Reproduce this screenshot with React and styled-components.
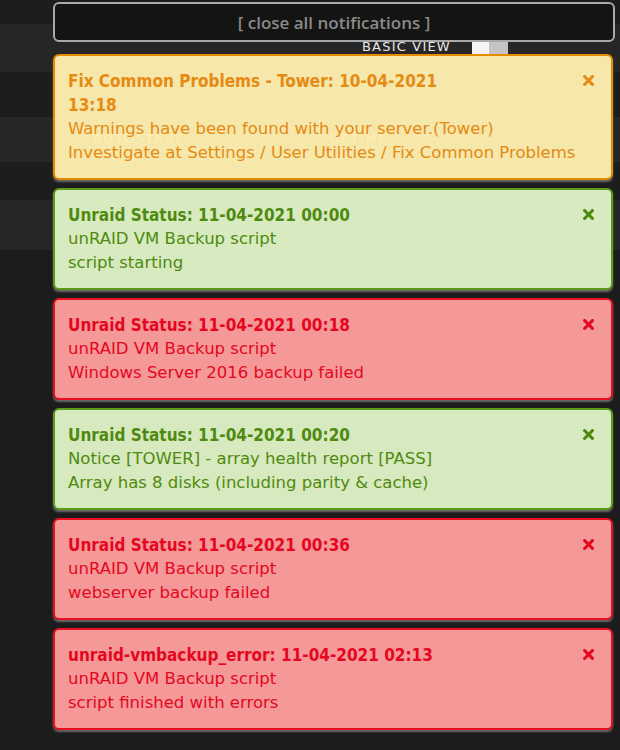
import styled, { createGlobalStyle } from "styled-components";

const GlobalStyle = createGlobalStyle`
    html, body {
        margin: 0;
        padding: 0;
        background: #1c1c1c;
    }
    body {
        width: 620px;
        height: 750px;
        overflow: hidden;
        font-family: "DejaVu Sans", "Open Sans", sans-serif;
    }
`;

const notifications = [
    {
        kind: "warning",
        title: "Fix Common Problems - Tower: 10-04-2021 13:18",
        lines: [
            "Warnings have been found with your server.(Tower)",
            "Investigate at Settings / User Utilities / Fix Common Problems",
        ],
    },
    {
        kind: "normal",
        title: "Unraid Status: 11-04-2021 00:00",
        lines: ["unRAID VM Backup script", "script starting"],
    },
    {
        kind: "alert",
        title: "Unraid Status: 11-04-2021 00:18",
        lines: ["unRAID VM Backup script", "Windows Server 2016 backup failed"],
    },
    {
        kind: "normal",
        title: "Unraid Status: 11-04-2021 00:20",
        lines: [
            "Notice [TOWER] - array health report [PASS]",
            "Array has 8 disks (including parity & cache)",
        ],
    },
    {
        kind: "alert",
        title: "Unraid Status: 11-04-2021 00:36",
        lines: ["unRAID VM Backup script", "webserver backup failed"],
    },
    {
        kind: "alert",
        title: "unraid-vmbackup_error: 11-04-2021 02:13",
        lines: ["unRAID VM Backup script", "script finished with errors"],
    },
];

// card backgrounds are a touch see-through, like the jGrowl popups
const palette = {
    warning: { bg: "rgba(253, 237, 174, 0.97)", fg: "#e58a12", border: "#e68a00" },
    normal: { bg: "rgba(222, 241, 196, 0.97)", fg: "#4f8a10", border: "#5c9a1a" },
    alert: { bg: "rgba(252, 157, 157, 0.97)", fg: "#e4071f", border: "#e8101f" },
};

// rows of the dashboard table that sits under the notifications
const rows = [
    { h: 24, shade: "dark" },
    { h: 48, shade: "light", header: true },
    { h: 45, shade: "dark" },
    { h: 45, shade: "light", labels: true },
    { h: 38, shade: "dark" },
    { h: 50, shade: "light" },
];

const CloseIcon = () => (
    <svg width="11" height="11" viewBox="0 0 11 11">
        <path
            d="M1.6 1.6 L9.4 9.4 M9.4 1.6 L1.6 9.4"
            stroke="currentColor"
            strokeWidth="3"
            strokeLinecap="square"
        />
    </svg>
);

const App = () => {
    return (
        <>
            <GlobalStyle />
            <Page>
                <Backdrop>
                    {rows.map((row, i) => (
                        <BackRow key={i} $h={row.h} $shade={row.shade}>
                            {row.header && (
                                <ViewSwitch>
                                    <ViewLabel>Basic View</ViewLabel>
                                    <Toggle>
                                        <ToggleKnob />
                                        <ToggleTrack />
                                    </Toggle>
                                </ViewSwitch>
                            )}
                            {row.labels && (
                                <>
                                    <ColLabel $left={93}>Autostart</ColLabel>
                                    <ColLabel $left={330}>Uptime</ColLabel>
                                </>
                            )}
                        </BackRow>
                    ))}
                </Backdrop>

                <Overlay>
                    <CloseAll>[ close all notifications ]</CloseAll>
                    <NoteList>
                        {notifications.map((note, i) => (
                            <Note key={i} $kind={note.kind}>
                                <NoteTitle>{note.title}</NoteTitle>
                                {note.lines.map((line) => (
                                    <NoteLine key={line}>{line}</NoteLine>
                                ))}
                                <CloseBtn>
                                    <CloseIcon />
                                </CloseBtn>
                            </Note>
                        ))}
                    </NoteList>
                </Overlay>
            </Page>
        </>
    );
};

export default App;

const Page = styled.div`
    position: relative;
    width: 620px;
    height: 750px;
    background: #1c1c1c;
`;

const Backdrop = styled.div`
    display: flex;
    flex-direction: column;
`;

const BackRow = styled.div`
    position: relative;
    height: ${(props) => props.$h}px;
    background: ${(props) => (props.$shade === "light" ? "#262626" : "#1d1d1d")};
`;

const ViewSwitch = styled.div`
    position: absolute;
    left: 362px;
    top: 14px;
    display: flex;
    align-items: center;
    gap: 21px;
`;

const ViewLabel = styled.span`
    font-family: "DejaVu Sans", sans-serif;
    font-size: 13px;
    letter-spacing: 1.2px;
    text-transform: uppercase;
    color: #e8e8e8;
`;

const Toggle = styled.div`
    display: flex;
    height: 16px;
`;

const ToggleKnob = styled.div`
    width: 17px;
    background: #f4f4f4;
`;

const ToggleTrack = styled.div`
    width: 19px;
    background: #c4c4c4;
`;

const ColLabel = styled.span`
    position: absolute;
    left: ${(props) => props.$left}px;
    top: 14px;
    font-size: 13px;
    letter-spacing: 1.5px;
    text-transform: uppercase;
    color: #ffffff;
`;

const Overlay = styled.div`
    position: absolute;
    top: 2px;
    left: 53px;
    width: 562px;
    display: flex;
    flex-direction: column;
    gap: 12px;
`;

const CloseAll = styled.div`
    height: 36px;
    display: flex;
    align-items: center;
    justify-content: center;
    background: #141413;
    border: 2px solid #a9a9a9;
    border-radius: 6px;
    color: #8a8a8a;
    font-family: "Open Sans", sans-serif;
    font-size: 17px;
    font-weight: 600;
`;

const NoteList = styled.div`
    display: flex;
    flex-direction: column;
    gap: 8px;
    width: 560px;
`;

const Note = styled.div`
    position: relative;
    box-sizing: border-box;
    padding: 13px 20px 13px 13px;
    background: ${(props) => palette[props.$kind].bg};
    color: ${(props) => palette[props.$kind].fg};
    border: 2px solid ${(props) => palette[props.$kind].border};
    border-radius: 6px;
    box-shadow: 0 2px 2px #6a6a6a;
    font-size: 16.5px;
    line-height: 24px;
`;

const NoteTitle = styled.div`
    max-width: 400px;
    font-family: "DejaVu Sans Condensed", "DejaVu Sans", sans-serif;
    font-size: 17px;
    font-weight: 700;
`;

const NoteLine = styled.div``;

const CloseBtn = styled.span`
    position: absolute;
    top: 19px;
    right: 17px;
    display: flex;
`;
